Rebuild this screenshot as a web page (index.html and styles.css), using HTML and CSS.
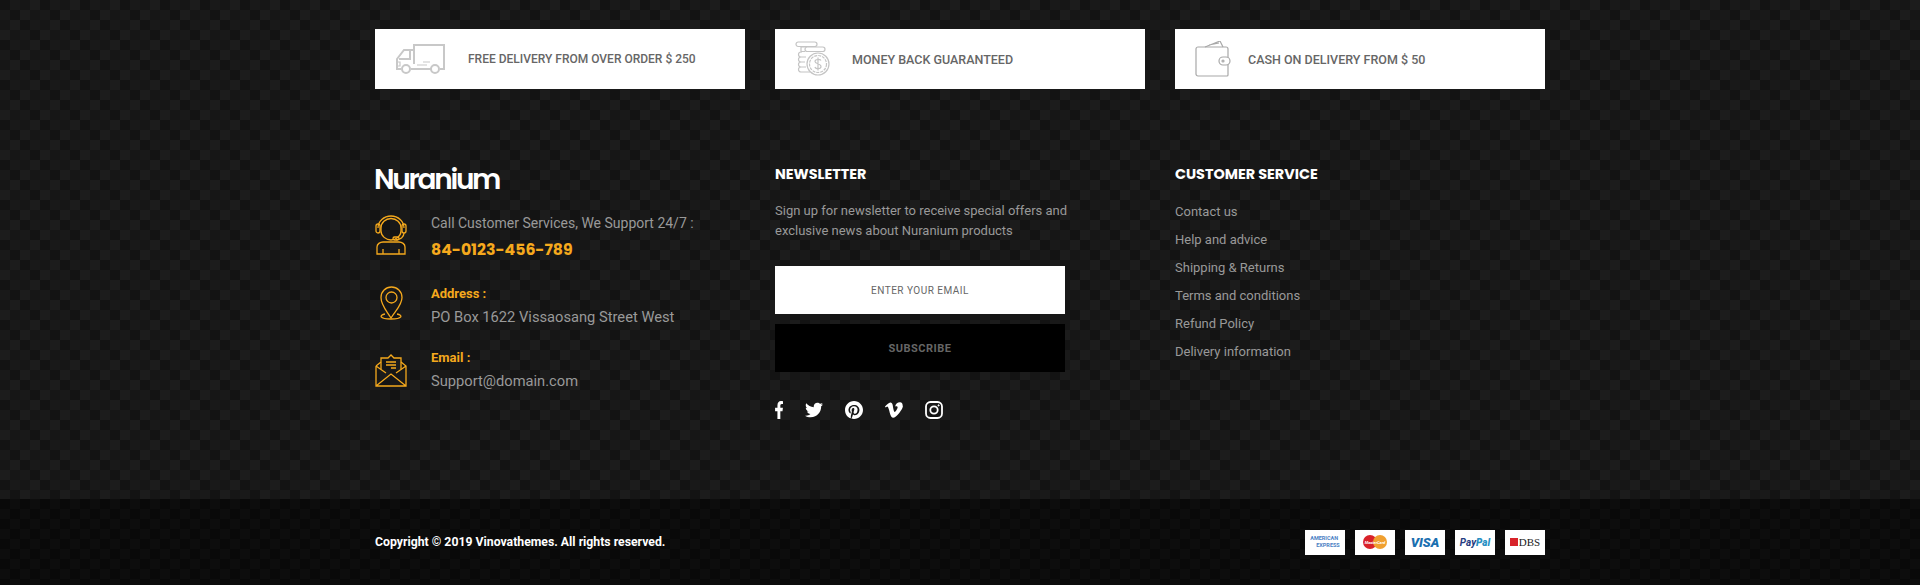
FILE: index.html
```html
<!DOCTYPE html>
<html lang="en">
<head>
    <meta charset="UTF-8">
    <title>Nuranium</title>
    <link rel="stylesheet" href="styles.css">
</head>
<body>
    <footer class="footer">
        <div class="footer-top">
            <div class="wrap">
                <div class="services">
                    <div class="service">
                        <svg class="service-icon" width="50" height="30" viewBox="0 0 50 30" fill="none" stroke="#c8c8c8" stroke-width="2">
                            <path d="M19 20V1h30v24h-4M36 25H16"/>
                            <path d="M19 6H9L2 15v10h4"/>
                            <path d="M15 6v9H4"/>
                            <circle cx="11" cy="25" r="4"/>
                            <circle cx="40" cy="25" r="4"/>
                            <path d="M22 21h10M28 18h7" stroke-width="1.200"/>
                            <path d="M2 18h3v4H2" stroke-width="1.200"/>
                        </svg>
                        <span class="service-text service-text-a">FREE DELIVERY FROM OVER ORDER $ 250</span>
                    </div>
                    <div class="service">
                        <svg class="service-icon" width="36" height="36" viewBox="0 0 36 36" fill="none" stroke="#c4c4c4" stroke-width="1.2">
                            <rect x="1" y="1" width="21" height="4.500" rx="2.200"/>
                            <rect x="10" y="6" width="20" height="4.500" rx="2.200"/>
                            <path d="M10 6H6v4.500h4M7 11H6a2.300 2.300 0 0 0 0 5h5M6 16a2.300 2.300 0 0 0 0 5h4M6 21a2.300 2.300 0 0 0 0 5h5M6 26a2.300 2.300 0 0 0 0 5h9"/>
                            <circle cx="23" cy="23" r="11"/>
                            <circle cx="23" cy="23" r="8.500" stroke-dasharray="3 1"/>
                            <path d="M26 19.500c-1-1.500-6-1.500-6 1s6 2 6 5-5.500 2.500-6 .5M23 16.500v13"/>
                        </svg>
                        <span class="service-text service-text-b">MONEY BACK GUARANTEED</span>
                    </div>
                    <div class="service">
                        <svg class="service-icon" width="36" height="36" viewBox="0 0 36 36" fill="none" stroke="#a8a8a8" stroke-width="1.2">
                            <path d="M3 6h28a2 2 0 0 1 2 2v26a1 1 0 0 1-1 1H3a2 2 0 0 1-2-2V8a2 2 0 0 1 2-2z"/>
                            <path d="M10 6 25 0l3 6M14 4l10-2"/>
                            <rect x="24" y="16" width="11" height="8" rx="4" fill="#fff"/>
                            <circle cx="28" cy="20" r="1"/>
                        </svg>
                        <span class="service-text service-text-c">CASH ON DELIVERY FROM $ 50</span>
                    </div>
                </div>
                <div class="columns">
                    <div class="col">
                        <div class="logo">Nuranium</div>
                        <div class="contact contact-phone">
                            <svg class="contact-icon icon-phone" width="32" height="40" viewBox="0 0 32 40" fill="none" stroke="#f5a91d" stroke-width="1.300">
                                <path d="M3 13a13 12 0 0 1 26 0"/>
                                <path d="M6 13a10 9.500 0 0 1 20 0v3c0 5-5 9-10 9s-10-4-10-9z"/>
                                <rect x="1" y="9" width="4" height="9" rx="2"/>
                                <rect x="27" y="9" width="4" height="9" rx="2"/>
                                <path d="M29 18c0 4-4 7-8 6.500"/>
                                <rect x="18" y="22" width="6" height="3" rx="1.500"/>
                                <path d="M2 39v-7c0-3 3-5 6-5h16c3 0 6 2 6 5v7zM8 39v-5M24 39v-5"/>
                            </svg>
                            <div class="contact-body">
                                <p class="contact-line">Call Customer Services, We Support 24/7 :</p>
                                <p class="phone">84-0123-456-789</p>
                            </div>
                        </div>
                        <div class="contact contact-address">
                            <svg class="contact-icon icon-pin" width="32" height="36" viewBox="0 0 32 36" fill="none" stroke="#f5a91d" stroke-width="1.300">
                                <path d="M16 32C11 24 6 19 6 11.500a10.500 10.500 0 0 1 21 0C27 19 21 24 16 32z"/>
                                <circle cx="16.500" cy="11.500" r="5.500"/>
                                <path d="M10 28c-6 1-6 5 6 5s12-4 6-5"/>
                            </svg>
                            <div class="contact-body">
                                <p class="contact-label">Address :</p>
                                <p class="contact-line contact-value">PO Box 1622 Vissaosang Street West</p>
                            </div>
                        </div>
                        <div class="contact contact-email">
                            <svg class="contact-icon icon-mail" width="32" height="34" viewBox="0 0 32 34" fill="none" stroke="#f5a91d" stroke-width="1.300">
                                <path d="M1 13v20h30V13L26 9M6 9l-5 4M1 33l15-12 15 12M1 13l10 7M31 13l-10 7"/>
                                <path d="M6 16V5h7l3-3 3 3h7v11"/>
                                <path d="M11 9h10M11 12h10M16 15h5"/>
                            </svg>
                            <div class="contact-body">
                                <p class="contact-label">Email :</p>
                                <p class="contact-line contact-value">Support@domain.com</p>
                            </div>
                        </div>
                    </div>
                    <div class="col">
                        <h3 class="col-title">NEWSLETTER</h3>
                        <p class="news-text">Sign up for newsletter to receive special offers and exclusive news about Nuranium products</p>
                        <form class="news-form">
                            <div class="news-input">ENTER YOUR EMAIL</div>
                            <div class="news-btn">SUBSCRIBE</div>
                        </form>
                        <div class="social">
                            <svg width="8" height="18" viewBox="20 0 276 512" preserveAspectRatio="none" fill="#fff"><path d="M279 288l14-93h-89v-60c0-25 12-50 52-50h41V6s-37-6-72-6c-73 0-121 44-121 125v70H23v93h81v224h100V288z"/></svg>
                            <svg width="18" height="18" viewBox="0 0 512 512" fill="#fff"><path d="M459 152c1 4 1 9 1 13 0 139-106 299-299 299-59 0-115-17-161-47 8 1 16 1 25 1 49 0 94-17 130-45-46-1-85-31-98-73 6 1 13 2 20 2 9 0 19-1 28-4-48-10-84-52-84-103v-1c14 8 30 13 47 13-28-19-47-51-47-87 0-19 5-37 14-53 52 64 129 105 216 110-2-8-3-16-3-24 0-58 47-105 105-105 30 0 58 13 77 33 24-5 47-14 67-26-8 25-24 45-46 58 21-2 42-8 60-16-14 21-32 39-52 54z"/></svg>
                            <svg width="18" height="18" viewBox="0 8 496 496" fill="#fff"><path d="M496 256c0 137-111 248-248 248-26 0-50-4-73-11 10-16 25-44 31-66 3-11 15-56 15-56 8 15 30 27 54 27 71 0 123-66 123-147 0-78-64-136-146-136-102 0-156 69-156 143 0 35 18 78 48 92 4 2 7 1 8-3l7-27c1-3 0-5-2-8-10-12-18-34-18-55 0-53 40-104 108-104 59 0 100 40 100 97 0 65-33 110-75 110-24 0-41-19-35-43 7-28 20-59 20-79 0-18-10-34-30-34-24 0-43 25-43 58 0 21 7 35 7 35s-24 100-28 119c-5 21-3 50-1 69C72 464 0 368 0 256 0 119 111 8 248 8s248 111 248 248z"/></svg>
                            <svg width="18" height="16" viewBox="0 60 448 396" fill="#fff"><path d="M447 153c-2 44-33 104-92 180-61 80-113 119-155 119-26 0-48-24-66-73-36-130-51-206-81-206-3 0-15 7-34 21L0 168c51-44 99-94 129-97 34-3 55 20 63 70 28 177 40 204 91 124 18-29 28-51 30-66 5-44-35-41-62-29 22-71 63-106 124-104 45 1 66 30 64 87z"/></svg>
                            <svg width="18" height="18" viewBox="0 0 18 18" fill="none" stroke="#fff" stroke-width="1.800"><rect x="1" y="1" width="16" height="16" rx="4.500"/><circle cx="9" cy="9" r="3.700"/><circle cx="13.600" cy="4.400" r=".6" fill="#fff" stroke-width="1"/></svg>
                        </div>
                    </div>
                    <div class="col">
                        <h3 class="col-title">CUSTOMER SERVICE</h3>
                        <ul class="links">
                            <li>Contact us</li>
                            <li>Help and advice</li>
                            <li>Shipping &amp; Returns</li>
                            <li>Terms and conditions</li>
                            <li>Refund Policy</li>
                            <li>Delivery information</li>
                        </ul>
                    </div>
                </div>
            </div>
        </div>
        <div class="footer-bottom">
            <div class="wrap bottom-row">
                <p class="copyright">Copyright © 2019 Vinovathemes. All rights reserved.</p>
                <div class="payments">
                    <div class="pay"><span class="pay-amex">AMERICAN<br><span class="pay-amex-low">EXPRESS</span></span></div>
                    <div class="pay">
                        <svg width="24" height="14" viewBox="0 0 24 14"><circle cx="7" cy="7" r="7" fill="#d9222a"/><circle cx="17" cy="7" r="7" fill="#f0a030"/><text x="12" y="8.500" font-size="4" font-weight="700" font-style="italic" fill="#fff" text-anchor="middle">MasterCard</text></svg>
                    </div>
                    <div class="pay"><span class="pay-visa">VISA</span></div>
                    <div class="pay"><span class="pay-paypal">Pay<b>Pal</b></span></div>
                    <div class="pay pay-dbs"><i class="dbs-mark"></i><span class="pay-dbs-text">DBS</span></div>
                </div>
            </div>
        </div>
    </footer>
</body>
</html>
```

FILE: styles.css
```css
* {
    box-sizing: border-box;
}
body {
    margin: 0;
    background: #151515;
    color: #999;
    font-family: Roboto, "Liberation Sans", sans-serif;
}
p, h3, ul {
    margin: 0;
    padding: 0;
}
.wrap {
    width: 1170px;
    margin: 0 auto;
}
.footer-top {
    height: 499px;
    padding-top: 29px;
    background-color: #151515;
    background-image:
        conic-gradient(rgba(255,255,255,.012) 25%, transparent 0 50%, rgba(255,255,255,.012) 0 75%, transparent 0),
        conic-gradient(#191919 25%, #131313 0 50%, #191919 0 75%, #131313 0);
    background-size: 40px 40px, 20px 20px;
}
.services {
    display: flex;
    gap: 30px;
}
.service {
    display: flex;
    align-items: center;
    width: 370px;
    height: 60px;
    background: #fff;
}
.service-icon {
    flex: none;
    margin-left: 20px;
}
.service-text {
    font-size: 12.500px;
    font-weight: 500;
    color: #666;
}
.service-text-a {
    margin-left: 23px;
    font-size: 12px;
}
.service-text-b {
    margin-left: 21px;
}
.service-text-c {
    margin-left: 17px;
}
.columns {
    display: flex;
    gap: 30px;
    margin-top: 75px;
}
.col {
    width: 370px;
}
.logo {
    margin-left: -1px;
    font-family: Poppins, "Open Sans", sans-serif;
    font-size: 28px;
    font-weight: 600;
    letter-spacing: -2.300px;
    line-height: 32px;
    color: #fff;
}
.contact {
    display: flex;
    gap: 24px;
}
.contact-phone {
    margin-top: 17px;
}
.contact-address {
    margin-top: 25px;
}
.contact-email {
    margin-top: 22px;
}
.contact-icon {
    flex: none;
}
.icon-phone {
    margin-top: 2px;
}
.icon-pin {
    margin-top: 1px;
}
.icon-mail {
    margin-top: 4px;
}
.contact-line {
    font-size: 14px;
    line-height: 20px;
    color: #999;
}
.contact-value {
    margin-top: 4px;
    font-size: 14.700px;
}
.contact-label {
    font-size: 13px;
    font-weight: 700;
    line-height: 18px;
    color: #f5a91d;
}
.phone {
    margin-top: 7px;
    font-family: Poppins, "Open Sans", sans-serif;
    font-size: 15.700px;
    font-weight: 700;
    line-height: 20px;
    color: #f5a91d;
}
.col-title {
    font-family: Poppins, "Open Sans", sans-serif;
    font-size: 14.400px;
    font-weight: 700;
    line-height: 20px;
    color: #fff;
}
.news-text {
    margin-top: 17px;
    width: 300px;
    font-size: 13px;
    line-height: 20px;
    color: #999;
}
.news-form {
    margin-top: 25px;
    width: 290px;
}
.news-input, .news-btn {
    display: flex;
    align-items: center;
    justify-content: center;
    height: 48px;
    font-size: 10px;
    letter-spacing: .5px;
}
.news-input {
    background: #fff;
    color: #666;
}
.news-btn {
    margin-top: 10px;
    background: #000;
    color: #666;
    font-size: 11px;
    font-weight: 700;
}
.social {
    display: flex;
    align-items: center;
    margin-top: 29px;
    gap: 22px;
}
.links {
    margin-top: 14px;
    list-style: none;
    font-size: 13px;
    line-height: 28px;
}
.footer-bottom {
    height: 86px;
    background-color: #0b0b0b;
    background-image:
        conic-gradient(#0d0d0d 25%, #090909 0 50%, #0d0d0d 0 75%, #090909 0);
    background-size: 20px 20px;
}
.bottom-row {
    display: flex;
    align-items: center;
    justify-content: space-between;
    height: 100%;
}
.copyright {
    font-size: 12.250px;
    font-weight: 700;
    color: #fff;
}
.payments {
    display: flex;
    gap: 10px;
}
.pay {
    display: flex;
    align-items: center;
    justify-content: center;
    width: 40px;
    height: 25px;
    background: #fff;
}
.pay-amex {
    font-size: 5.500px;
    font-weight: 700;
    line-height: 7px;
    color: #4a80c4;
}
.pay-amex-low {
    margin-left: 6px;
}
.pay-visa {
    font-size: 13px;
    font-weight: 900;
    font-style: italic;
    color: #1a6fb0;
}
.pay-paypal {
    font-size: 10px;
    font-weight: 700;
    font-style: italic;
    color: #253b80;
}
.pay-paypal b {
    color: #2790c3;
}
.dbs-mark {
    width: 8px;
    height: 8px;
    background: #d8232a;
}
.pay-dbs-text {
    margin-left: 1px;
    font-family: "Liberation Serif", serif;
    font-size: 11px;
    color: #222;
}
```
